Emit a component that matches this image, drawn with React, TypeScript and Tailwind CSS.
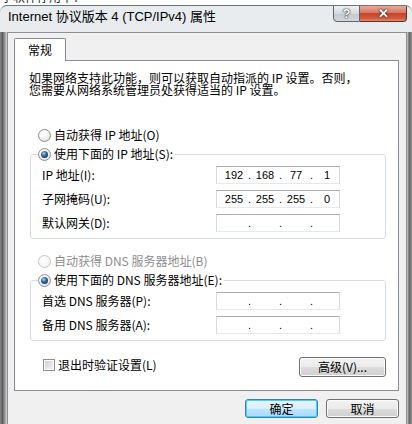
import React from "react";

const CJK = "font-['Noto_Sans_CJK_SC','Noto_Sans',sans-serif]";

function Radio({ checked, disabled }: { checked?: boolean; disabled?: boolean }) {
  return (
    <span
      className={
        "flex h-[13px] w-[13px] shrink-0 items-center justify-center rounded-full border " +
        (disabled
          ? "border-[#c5c5c5] bg-[radial-gradient(circle_at_35%_30%,#ffffff,#f0f0f0)]"
          : "border-[#8a8c8e] bg-[radial-gradient(circle_at_35%_30%,#ffffff_20%,#d8d8d8)]")
      }
    >
      {checked && (
        <span className="h-[7px] w-[7px] rounded-full bg-[radial-gradient(circle_at_40%_35%,#9fd3f5,#2b5f94_45%,#0c2748)]" />
      )}
    </span>
  );
}

function IpField({ parts }: { parts?: string[] }) {
  return (
    <div className="flex h-[18px] w-[124px] overflow-hidden border border-[#abadb3] border-x-[#d6dae0] border-b-[#e3e9ef] bg-white pl-[3px] font-['Liberation_Sans',sans-serif] text-[11px] leading-[16px] text-black">
      {[0, 1, 2, 3].map((i) => (
        <div key={i} className="flex shrink-0">
          <span className="w-[28px] text-center">{parts ? parts[i] : ""}</span>
          {i < 3 && <span className="w-[3px] text-center">.</span>}
        </div>
      ))}
    </div>
  );
}

function Row({ label, parts }: { label: string; parts?: string[] }) {
  return (
    <div className="flex h-[18px] items-center">
      <span className="w-[185px] pl-[11px]">{label}</span>
      <IpField parts={parts} />
    </div>
  );
}

function WinButton({ children, def, w }: { children: React.ReactNode; def?: boolean; w: string }) {
  return (
    <div
      className={
        "flex items-center justify-center rounded-[3px] border text-[12px] leading-none text-black " +
        w +
        " " +
        (def
          ? "border-[#3c7fb1] bg-[linear-gradient(to_bottom,#eaf6fd_0%,#d9f0fc_50%,#bee6fd_51%,#a7d9f5_100%)] shadow-[inset_0_0_0_1px_#48d0f8]"
          : "border-[#707070] bg-[linear-gradient(to_bottom,#f2f2f2_0%,#ebebeb_50%,#dddddd_51%,#cfcfcf_100%)] shadow-[inset_0_0_0_1px_#fcfcfc]")
      }
    >
      {children}
    </div>
  );
}

export default function App() {
  return (
    <div className={"flex h-[424px] w-[412px] flex-col overflow-hidden bg-white " + CJK}>
      {/* background window peeking above */}
      <div className="h-[5px] shrink-0 overflow-hidden text-[12px] leading-[12px] text-[#222]">
        <div className="-mt-[9px] pl-[1px]">字软件停用中：</div>
      </div>

      {/* dialog */}
      <div className="flex flex-1 flex-col overflow-hidden rounded-t-[7px] border-t border-[#6d737a] bg-[linear-gradient(to_bottom,#e9ecef,#dde1e4)]">
        {/* title bar */}
        <div className="flex h-[26px] shrink-0 items-start">
          <div className="flex-1 pl-[8px] pt-[3px] font-['Liberation_Sans','Noto_Sans_CJK_SC',sans-serif] text-[13px] leading-[16px] text-black">
            Internet 协议版本 4 (TCP/IPv4) 属性
          </div>
          <div className="mr-[5px] flex h-[17px] -mt-px">
            <div className="flex w-[27px] items-center justify-center rounded-bl-[4px] border border-[#5d6570] bg-[linear-gradient(to_bottom,#eef0f2,#d6dadf_50%,#c3c8ce_51%,#d3d8dc)] font-['Liberation_Sans',sans-serif] text-[13px] font-bold text-white [text-shadow:0_0_2px_#333,0_0_1px_#000]">
              ?
            </div>
            <div className="flex w-[47px] items-center justify-center rounded-br-[4px] border border-l-0 border-[#5d3530] bg-[linear-gradient(to_bottom,#e9a99b,#d9785f_45%,#c7452b_50%,#d0583a_80%,#e3886b)] font-['Liberation_Sans',sans-serif] text-[13px] font-bold leading-none text-white [text-shadow:0_0_2px_#3a0d05,0_0_1px_#000]">
              ✕
            </div>
          </div>
        </div>

        {/* frame + client */}
        <div className="flex flex-1">
          <div className="w-[7px] shrink-0 bg-[linear-gradient(to_right,#8a8a8a,#5e5e5e_35%,#9c9c9c_70%,#d2d2d2)]" />
          <div className="flex w-[400px] shrink-0 flex-col border-x border-t border-[#8e9195] bg-[#f0f0f0]">
            {/* tab header */}
            <div className="flex pl-[6px] pt-[5px]">
              <div className="relative z-10 -mb-px flex h-[23px] w-[52px] items-start justify-center rounded-t-[2px] border-x border-t border-[#898c95] bg-white pt-[4px] text-[12px] leading-[14px] text-black">
                常规
              </div>
            </div>
            {/* tab page */}
            <div className="ml-[6px] flex h-[331px] w-[385px] flex-col border border-[#898c95] bg-white text-[12px] leading-[14px] text-black">
              <div className="pl-[14px] pt-[11px] leading-[12px]">
                <div>如果网络支持此功能，则可以获取自动指派的 IP 设置。否则，</div>
                <div>您需要从网络系统管理员处获得适当的 IP 设置。</div>
              </div>

              <div className="mt-[32px] flex h-[14px] items-center gap-[3px] pl-[23px]">
                <Radio />
                <span>自动获得 IP 地址(O)</span>
              </div>

              <div className="ml-[15px] mt-[12px] flex h-[85px] w-[356px] flex-col rounded-[3px] border border-[#d5dfe5]">
                <div className="-mt-[8px] ml-[7px] flex h-[14px] w-fit items-center gap-[3px] bg-white pr-[2px]">
                  <Radio checked />
                  <span>使用下面的 IP 地址(S):</span>
                </div>
                <div className="mt-[5px] flex flex-col gap-[6px]">
                  <Row label="IP 地址(I):" parts={["192", "168", "77", "1"]} />
                  <Row label="子网掩码(U):" parts={["255", "255", "255", "0"]} />
                  <Row label="默认网关(D):" />
                </div>
              </div>

              <div className="mt-[15px] flex h-[14px] items-center gap-[3px] pl-[23px] text-[#8d8d8d]">
                <Radio disabled />
                <span>自动获得 DNS 服务器地址(B)</span>
              </div>

              <div className="ml-[15px] mt-[12px] flex h-[61px] w-[356px] flex-col rounded-[3px] border border-[#d5dfe5]">
                <div className="-mt-[8px] ml-[7px] flex h-[14px] w-fit items-center gap-[3px] bg-white pr-[2px]">
                  <Radio checked />
                  <span>使用下面的 DNS 服务器地址(E):</span>
                </div>
                <div className="mt-[5px] flex flex-col gap-[6px]">
                  <Row label="首选 DNS 服务器(P):" />
                  <Row label="备用 DNS 服务器(A):" />
                </div>
              </div>

              <div className="mt-[16px] flex items-start justify-between pl-[28px] pr-[12px]">
                <div className="mt-[1px] flex h-[14px] items-center gap-[3px]">
                  <span className="flex h-[12px] w-[12px] items-center justify-center border border-[#8e8f8f] bg-white">
                    <span className="h-[8px] w-[8px] bg-[linear-gradient(135deg,#cfcfcf,#f4f4f4)]" />
                  </span>
                  <span>退出时验证设置(L)</span>
                </div>
                <WinButton w="w-[87px] h-[20px]">高级(V)...</WinButton>
              </div>
            </div>

            {/* dialog buttons */}
            <div className="mt-[8px] flex justify-end gap-[8px] pr-[7px]">
              <WinButton def w="w-[73px] h-[19px]">确定</WinButton>
              <WinButton w="w-[73px] h-[19px]">取消</WinButton>
            </div>
          </div>
          <div className="w-[5px] shrink-0 bg-[linear-gradient(to_right,#d0d0d0,#6a6a6a_40%,#8a8a8a)]" />
        </div>
      </div>
    </div>
  );
}
